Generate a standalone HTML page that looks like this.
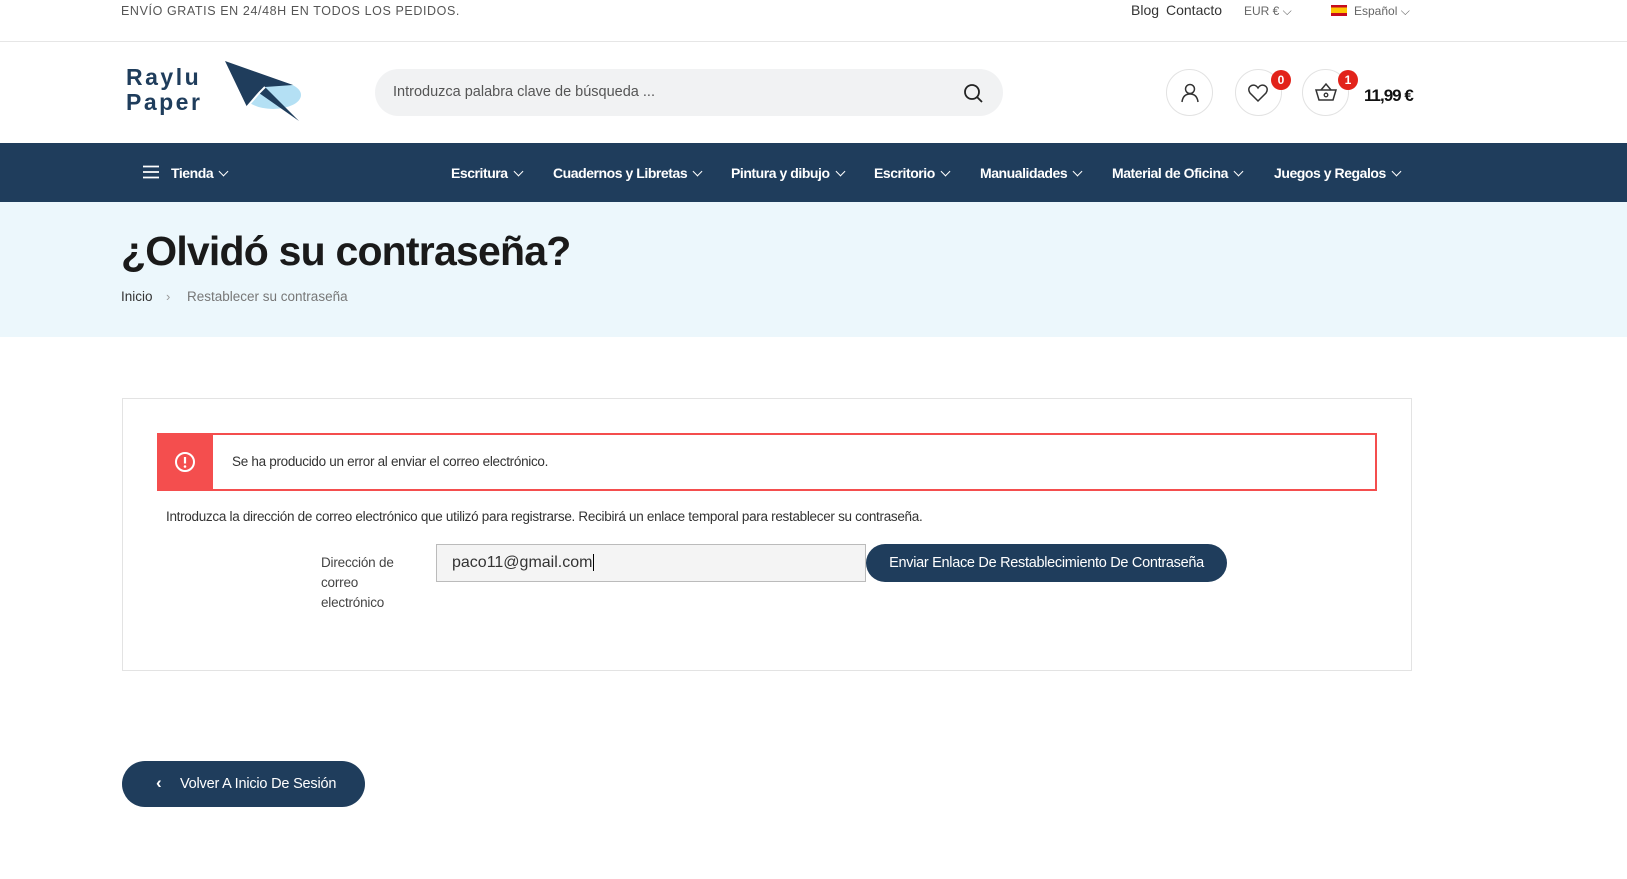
<!DOCTYPE html>
<html><head><meta charset="utf-8">
<style>
*{margin:0;padding:0;box-sizing:border-box}
body{width:1627px;height:879px;overflow:hidden;background:#fff;font-family:"Liberation Sans",sans-serif;color:#222;position:relative}
.a{position:absolute;white-space:nowrap}
.top{font-size:12.5px;color:#555;letter-spacing:0.6px}
.circ{position:absolute;width:47px;height:47px;border:1px solid #e2e2e2;border-radius:50%}
.badge{position:absolute;width:20px;height:20px;border-radius:50%;background:#e2231a;color:#fff;font-size:12px;font-weight:bold;text-align:center;line-height:20px}
.nav{position:absolute;left:0;top:143px;width:1627px;height:59px;background:#1f3d5c}
.ni{position:absolute;top:22px;color:#fff;font-size:14px;font-weight:bold;letter-spacing:-0.45px}
.ni:after{content:"";display:inline-block;width:6px;height:6px;border-right:1.5px solid #fff;border-bottom:1.5px solid #fff;transform:rotate(45deg);margin-left:7px;position:relative;top:-3px}
</style></head><body>
<div class="a top" style="left:121px;top:4px">ENVÍO GRATIS EN 24/48H EN TODOS LOS PEDIDOS.</div>
<div class="a" style="left:1131px;top:2px;font-size:14px;color:#333">Blog</div>
<div class="a" style="left:1166px;top:2px;font-size:14px;color:#333">Contacto</div>
<div class="a" style="left:1244px;top:4px;font-size:12px;color:#666">EUR € ⌵</div>
<div class="a" style="left:1331px;top:5px;width:16px;height:11px;background:linear-gradient(#c60b1e 0 25%,#ffc400 25% 75%,#c60b1e 75%)"></div>
<div class="a" style="left:1354px;top:4px;font-size:12px;color:#666">Español ⌵</div>
<div class="a" style="left:0;top:41px;width:1627px;height:1px;background:#e6e6e6"></div>

<div class="a" style="left:126px;top:65px;font-size:23px;font-weight:bold;color:#1f3d5c;letter-spacing:2.5px;line-height:25px">Raylu<br>Paper</div>
<svg class="a" style="left:225px;top:61px" width="78" height="62" viewBox="0 0 78 62">
<ellipse cx="48" cy="34" rx="28" ry="14" fill="#b4e0f4"/>
<path d="M0 0 L68 24 L40 26 L74 60 L34 32 L22 46 Z" fill="#1f3d5c"/>
<path d="M22 46 L34 32 L40 26" stroke="#fff" stroke-width="2" fill="none"/>
</svg>

<div class="a" style="left:375px;top:69px;width:628px;height:47px;border-radius:24px;background:#f1f2f3"></div>
<div class="a" style="left:393px;top:84px;font-size:14.5px;color:#555">Introduzca palabra clave de búsqueda ...</div>
<svg class="a" style="left:963px;top:83px" width="22" height="22" viewBox="0 0 22 22"><circle cx="9" cy="9" r="7" fill="none" stroke="#222" stroke-width="1.8"/><path d="M14 14 L19 19" stroke="#222" stroke-width="1.8"/></svg>

<div class="circ" style="left:1166px;top:69px"></div>
<svg class="a" style="left:1179px;top:82px" width="22" height="22" viewBox="0 0 22 22"><circle cx="11" cy="7" r="4.5" fill="none" stroke="#333" stroke-width="1.5"/><path d="M3 20 Q4 12 11 12 Q18 12 19 20" fill="none" stroke="#333" stroke-width="1.5"/></svg>
<div class="circ" style="left:1235px;top:69px"></div>
<svg class="a" style="left:1247px;top:82px" width="22" height="22" viewBox="0 0 22 22"><path d="M11 19 L3 11 Q0 6 4.5 3.5 Q8.5 2 11 6 Q13.5 2 17.5 3.5 Q22 6 19 11 Z" fill="none" stroke="#333" stroke-width="1.5"/></svg>
<div class="badge" style="left:1271px;top:70px">0</div>
<div class="circ" style="left:1302px;top:69px"></div>
<svg class="a" style="left:1314px;top:80px" width="24" height="24" viewBox="0 0 24 24"><path d="M2 10 H22 L19 20 H5 Z" fill="none" stroke="#333" stroke-width="1.5"/><path d="M7 10 L12 4 L17 10" fill="none" stroke="#333" stroke-width="1.5"/><circle cx="12" cy="15" r="1.8" fill="none" stroke="#333" stroke-width="1.3"/></svg>
<div class="badge" style="left:1338px;top:70px">1</div>
<div class="a" style="left:1364px;top:86px;font-size:17px;font-weight:bold;color:#111;letter-spacing:-1px">11,99 €</div>

<div class="nav">
<svg class="a" style="left:143px;top:22px" width="16" height="14"><path d="M0 1.5H16M0 7H16M0 12.5H16" stroke="#fff" stroke-width="1.8"/></svg>
<div class="ni" style="left:171px">Tienda</div>
<div class="ni" style="left:451px">Escritura</div>
<div class="ni" style="left:553px">Cuadernos y Libretas</div>
<div class="ni" style="left:731px">Pintura y dibujo</div>
<div class="ni" style="left:874px">Escritorio</div>
<div class="ni" style="left:980px">Manualidades</div>
<div class="ni" style="left:1112px">Material de Oficina</div>
<div class="ni" style="left:1274px">Juegos y Regalos</div>
</div>

<div class="a" style="left:0;top:202px;width:1627px;height:135px;background:#ecf7fc"></div>
<div class="a" style="left:121px;top:228px;font-size:41px;font-weight:bold;color:#1a1a1a;letter-spacing:-0.8px">¿Olvidó su contraseña?</div>
<div class="a" style="left:121px;top:289px;font-size:13.5px;color:#333">Inicio</div>
<div class="a" style="left:166px;top:289px;font-size:13px;color:#999">›</div>
<div class="a" style="left:187px;top:289px;font-size:13.5px;color:#777">Restablecer su contraseña</div>

<div class="a" style="left:122px;top:398px;width:1290px;height:273px;border:1px solid #e3e3e3"></div>
<div class="a" style="left:157px;top:433px;width:1220px;height:58px;border:2px solid #f44e4e"></div>
<div class="a" style="left:157px;top:433px;width:56px;height:58px;background:#f44e4e"></div>
<svg class="a" style="left:174px;top:451px" width="22" height="22" viewBox="0 0 22 22"><circle cx="11" cy="11" r="9" fill="none" stroke="#fff" stroke-width="2"/><path d="M11 6 V12.5" stroke="#fff" stroke-width="2.2"/><circle cx="11" cy="15.5" r="1.3" fill="#fff"/></svg>
<div class="a" style="left:232px;top:454px;font-size:13.5px;color:#333;letter-spacing:-0.3px">Se ha producido un error al enviar el correo electrónico.</div>
<div class="a" style="left:166px;top:509px;font-size:13.5px;color:#333;letter-spacing:-0.3px">Introduzca la dirección de correo electrónico que utilizó para registrarse. Recibirá un enlace temporal para restablecer su contraseña.</div>
<div class="a" style="left:321px;top:553px;font-size:13.5px;color:#444;line-height:20px;letter-spacing:-0.2px">Dirección de<br>correo<br>electrónico</div>
<div class="a" style="left:436px;top:544px;width:430px;height:38px;background:#f4f4f4;border:1px solid #bbb"></div>
<div class="a" style="left:452px;top:554px;font-size:16px;color:#333">paco11@gmail.com<span style="border-left:1px solid #000;margin-left:1px"></span></div>
<div class="a" style="left:866px;top:544px;width:361px;height:38px;border-radius:19px;background:#1f3d5c;color:#fff;font-size:14.5px;text-align:center;line-height:38px;letter-spacing:-0.3px">Enviar Enlace De Restablecimiento De Contraseña</div>

<div class="a" style="left:122px;top:761px;width:243px;height:46px;border-radius:23px;background:#1f3d5c"></div>
<div class="a" style="left:156px;top:773px;font-size:17px;color:#fff;font-weight:bold">‹</div>
<div class="a" style="left:180px;top:776px;font-size:14.5px;color:#fff;letter-spacing:-0.2px">Volver A Inicio De Sesión</div>
</body></html>
